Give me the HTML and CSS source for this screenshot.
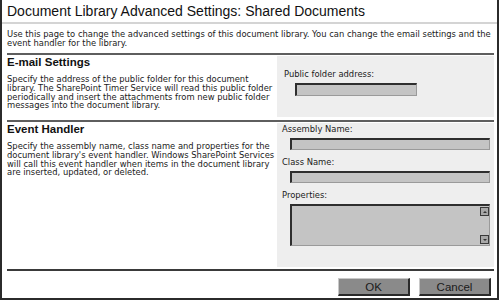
FILE: index.html
```html
<!DOCTYPE html>
<html lang="en">

<head>
    <meta charset="UTF-8">
    <title>Document Library Advanced Settings</title>
    <link rel="stylesheet" href="styles.css">
</head>

<body>

    <div class="dialog">
        <h1 class="dialog-title">Document Library Advanced Settings: Shared Documents</h1>

        <p class="intro">Use this page to change the advanced settings of this document library. You can change the email settings and the event handler for the library.</p>

        <div class="section section-email">
            <div class="section-info">
                <h2>E-mail Settings</h2>
                <p>Specify the address of the public folder for this document library. The SharePoint Timer Service will read this public folder periodically and insert the attachments from new public folder messages into the document library.</p>
            </div>
            <div class="section-fields">
                <div class="field field-wide">
                    <label>Public folder address:</label>
                    <div class="input input-short"></div>
                </div>
            </div>
        </div>

        <div class="section section-handler">
            <div class="section-info">
                <h2>Event Handler</h2>
                <p>Specify the assembly name, class name and properties for the document library's event handler. Windows SharePoint Services will call this event handler when items in the document library are inserted, updated, or deleted.</p>
            </div>
            <div class="section-fields">
                <div class="field">
                    <label>Assembly Name:</label>
                    <div class="input"></div>
                </div>
                <div class="field">
                    <label>Class Name:</label>
                    <div class="input"></div>
                </div>
                <div class="field">
                    <label>Properties:</label>
                    <div class="input textarea">
                        <div class="scroll">
                            <span class="scroll-btn scroll-up"></span>
                            <span class="scroll-btn scroll-down"></span>
                        </div>
                    </div>
                </div>
            </div>
        </div>

        <div class="buttons">
            <button type="button" class="btn">OK</button>
            <button type="button" class="btn btn-cancel">Cancel</button>
        </div>
    </div>

</body>

</html>
```

FILE: styles.css
```css
body {
    margin: 0;
    background-color: #fff;
    font-family: "DejaVu Sans", Verdana, sans-serif;
    color: #1a1a1a;
}

.dialog {
    width: 495px;
    height: 298px;
    border-left: 2px solid #2b2b2b;
    border-right: 2px solid #2b2b2b;
    border-bottom: 2px solid #2b2b2b;
    display: flex;
    flex-direction: column;
}

.dialog-title {
    font-family: "Liberation Sans", Arial, sans-serif;
    font-weight: normal;
    font-size: 14px;
    line-height: 18px;
    margin: 0;
    padding: 2px 5px 2px 5px;
    border-bottom: 2px solid #d4d4d4;
    color: #111;
}

.intro {
    font-size: 8.4px;
    line-height: 9px;
    margin: 0;
    padding: 6px 1px 5px 5px;
}

.section {
    display: grid;
    grid-template-columns: 270px 1fr;
    margin: 0 3px 0 5px;
    border-top: 2px solid #5e5e5e;
}

.section-info h2 {
    font-family: "Liberation Sans", Arial, sans-serif;
    font-size: 11.5px;
    line-height: 14px;
    margin: 0 0 6px 0;
    color: #111;
}

.section-info p {
    font-size: 8.4px;
    line-height: 8.8px;
    margin: 0;
}

.section-fields {
    background-color: #eeeeee;
    padding: 2px 4px 0 5px;
}

.section-email {
    height: 65px;
}

.section-email .section-fields {
    margin: 1px 0 3px 0;
    padding-top: 14px;
}

.section-handler {
    flex: 1;
}

.section-handler .section-fields {
    margin: 1px 0 2px 0;
}

.field label {
    display: block;
    font-size: 8.4px;
    line-height: 9px;
}

.field {
    margin-bottom: 8px;
}

.field-wide label {
    padding-left: 2px;
}

.input {
    height: 9px;
    margin: 4px 0 0 8px;
    background-color: #c4c4c4;
    border-top: 2px solid #2e2e2e;
    border-left: 2px solid #2e2e2e;
    border-right: 1px solid #9a9a9a;
    border-bottom: 1px solid #9a9a9a;
}

.input-short {
    width: 119px;
    height: 10px;
    margin-left: 13px;
}

.textarea {
    height: 39px;
    display: flex;
    justify-content: flex-end;
}

.scroll {
    width: 9px;
    display: flex;
    flex-direction: column;
    justify-content: space-between;
    padding: 1px 0;
}

.scroll-btn {
    width: 7px;
    height: 7px;
    background-color: #a8a8a8;
    border: 1px solid #3a3a3a;
    display: flex;
    align-items: center;
    justify-content: center;
}

.scroll-btn::after {
    content: "";
    border-left: 2px solid transparent;
    border-right: 2px solid transparent;
}

.scroll-up::after {
    border-bottom: 2px solid #333;
}

.scroll-down::after {
    border-top: 2px solid #333;
}

.buttons {
    display: flex;
    justify-content: flex-end;
    gap: 9px;
    margin: 0 3px 0 5px;
    padding: 7px 3px 2px 0;
    border-top: 2px solid #3a3a3a;
}

.btn {
    width: 72px;
    height: 18px;
    padding: 0;
    font-family: "Liberation Sans", Arial, sans-serif;
    font-size: 11.5px;
    color: #1a1a1a;
    background-color: #8a8a8a;
    border-top: 1px solid #c8c8c8;
    border-left: 1px solid #c8c8c8;
    border-right: 2px solid #2a2a2a;
    border-bottom: 2px solid #2a2a2a;
}
```
